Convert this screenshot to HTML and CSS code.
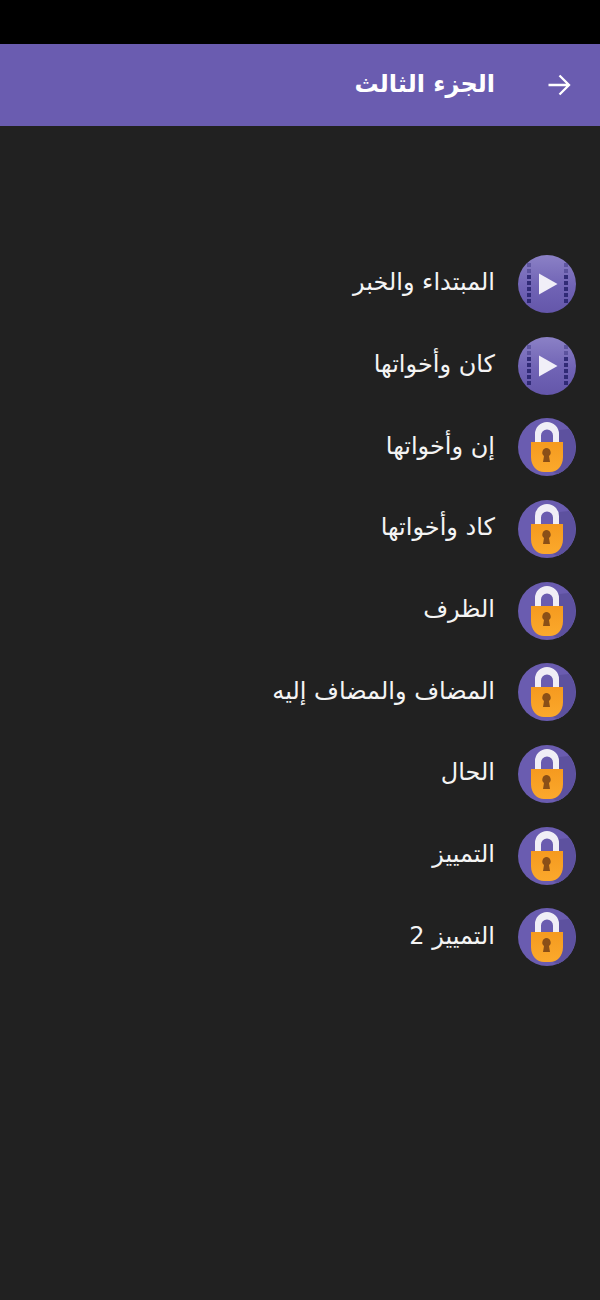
FILE: index.html
```html
<!DOCTYPE html>
<html lang="ar" dir="rtl">
<head>
    <meta charset="UTF-8">
    <meta name="viewport" content="width=device-width, initial-scale=1.0">
    <title>الجزء الثالث</title>
    <link rel="stylesheet" href="styles.css">
</head>
<body>
    <svg class="defs" width="0" height="0" aria-hidden="true">
        <defs>
            <linearGradient id="play-bg" x1="0" y1="0" x2="0" y2="1">
                <stop offset="0" stop-color="#8b81c6"/>
                <stop offset="0.55" stop-color="#7063b5"/>
                <stop offset="1" stop-color="#6456aa"/>
            </linearGradient>
            <linearGradient id="lock-body" x1="0" y1="0" x2="0" y2="1">
                <stop offset="0" stop-color="#f59a1f"/>
                <stop offset="1" stop-color="#fba92c"/>
            </linearGradient>
            <symbol id="icon-play" viewBox="0 0 58 58">
                <circle cx="29" cy="29" r="29" fill="url(#play-bg)"/>
                <!-- film strip perforations, fainter towards the top -->
                <g fill="#2a2570">
                    <g opacity="0.4">
                        <rect x="9" y="8" width="4" height="4"/>
                        <rect x="9" y="14" width="4" height="4"/>
                        <rect x="46" y="8" width="4" height="4"/>
                        <rect x="46" y="14" width="4" height="4"/>
                    </g>
                    <g opacity="0.9">
                        <rect x="9" y="20" width="4" height="4"/>
                        <rect x="9" y="26" width="4" height="4"/>
                        <rect x="9" y="32" width="4" height="4"/>
                        <rect x="9" y="38" width="4" height="4"/>
                        <rect x="9" y="44" width="4" height="4"/>
                        <rect x="46" y="20" width="4" height="4"/>
                        <rect x="46" y="26" width="4" height="4"/>
                        <rect x="46" y="32" width="4" height="4"/>
                        <rect x="46" y="38" width="4" height="4"/>
                        <rect x="46" y="44" width="4" height="4"/>
                    </g>
                </g>
                <path d="M21 18.500 39.500 29 21 39.500z" fill="#f1eff8"/>
            </symbol>
            <symbol id="icon-lock" viewBox="0 0 58 58">
                <circle cx="29" cy="29" r="29" fill="#6a5cb0"/>
                <!-- long shadow falling to the lower right -->
                <path d="M41 12 51 11A29 29 0 0 1 40 56L30 52z" fill="#5d519f"/>
                <path d="M17 26V16a12 12 0 0 1 24 0v10h-6V17.500a6 6 0 0 0-12 0V26z" fill="#f0eef6"/>
                <path d="M13 24h32v15c0 9-6 15-13 15h-6c-7 0-13-6-13-15z" fill="url(#lock-body)"/>
                <path d="M28.500 30a4.500 4.500 0 0 1 2.500 8l1 6h-7l1-6a4.500 4.500 0 0 1 2.500-8z" fill="#8a4f17"/>
            </symbol>
        </defs>
    </svg>

    <div class="status-bar"></div>

    <header class="app-bar">
        <svg class="back-arrow" viewBox="0 0 24 24" width="24" height="24">
            <path d="M1.500 12H22M12.500 2.500 22 12l-9.500 9.500" fill="none" stroke="#fff" stroke-width="2.300"/>
        </svg>
        <h1 class="app-title">الجزء الثالث</h1>
    </header>

    <main class="lesson-list">
        <a class="lesson"><svg class="lesson-icon"><use href="#icon-play"/></svg><span class="lesson-name">المبتداء والخبر</span></a>
        <a class="lesson"><svg class="lesson-icon"><use href="#icon-play"/></svg><span class="lesson-name">كان وأخواتها</span></a>
        <a class="lesson"><svg class="lesson-icon"><use href="#icon-lock"/></svg><span class="lesson-name">إن وأخواتها</span></a>
        <a class="lesson"><svg class="lesson-icon"><use href="#icon-lock"/></svg><span class="lesson-name">كاد وأخواتها</span></a>
        <a class="lesson"><svg class="lesson-icon"><use href="#icon-lock"/></svg><span class="lesson-name">الظرف</span></a>
        <a class="lesson"><svg class="lesson-icon"><use href="#icon-lock"/></svg><span class="lesson-name">المضاف والمضاف إليه</span></a>
        <a class="lesson"><svg class="lesson-icon"><use href="#icon-lock"/></svg><span class="lesson-name">الحال</span></a>
        <a class="lesson"><svg class="lesson-icon"><use href="#icon-lock"/></svg><span class="lesson-name">التمييز</span></a>
        <a class="lesson"><svg class="lesson-icon"><use href="#icon-lock"/></svg><span class="lesson-name">التمييز 2</span></a>
    </main>
</body>
</html>
```

FILE: styles.css
```css
html, body {
    margin: 0;
    height: 100%;
}
body {
    font-family: 'DejaVu Sans', 'Noto Sans', sans-serif;
    background-color: #212121;
    color: #fff;
}
.defs {
    display: block;
    height: 0;
}
.status-bar {
    height: 44px;
    background-color: #000;
}
.app-bar {
    height: 82px;
    box-sizing: border-box;
    display: flex;
    align-items: center;
    gap: 52px;
    padding-right: 29px;
    background-color: #6a5cb0;
}
.back-arrow {
    flex: none;
}
.app-title {
    margin: 0;
    padding-bottom: 2px;
    font-size: 24px;
    font-weight: bold;
}
.lesson-list {
    display: flex;
    flex-direction: column;
    padding-top: 117px;
}
.lesson {
    height: 81.7px;
    display: flex;
    align-items: center;
    gap: 23px;
    padding-right: 24px;
    font-size: 24px;
    color: #f4f4f4;
}
.lesson-name {
    padding-bottom: 3px;
}
.lesson-icon {
    flex: none;
    width: 58px;
    height: 58px;
}
```
